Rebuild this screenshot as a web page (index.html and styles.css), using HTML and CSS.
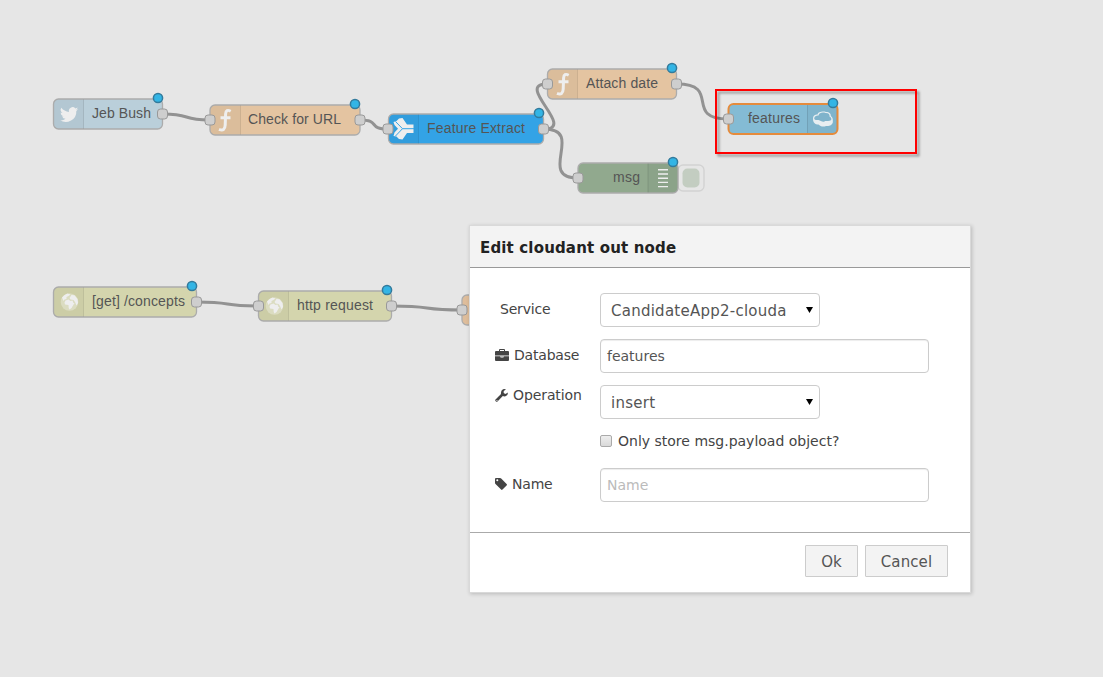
FILE: index.html
```html
<!DOCTYPE html>
<html lang="en">
<head>
<meta charset="utf-8">
<title>Flow editor</title>
<link rel="stylesheet" href="styles.css">
</head>
<body>
<svg class="canvas" width="1103" height="677" viewBox="0 0 1103 677">
  <defs>
    <rect id="port" x="-5" y="-5" width="10" height="10" rx="3"/>
    <circle id="dot" r="4.6"/>
    <g id="globe">
      <circle r="8.800" fill="#fff" opacity=".3"/>
      <path fill="#eee" d="M-7.500-4.500Q-5-7.500-2-8.500L1-7.500-1-6-3-5-3-3-5-2.500-6-1zM-4-1.500-1-2.500 1-1 3-1.500 4 1 5 1 3.500 3.500 2 6 0 7.500-.800 6-1 3-4.500 2.500-5 .5zM0-4 2-7 5-6.800 8-3 8.500 1 7 3.500 5.500 0 4-2 1-2.500z"/>
    </g>
    <path id="func" d="M5.200-8.800C2-10.500.3-9.500.1-6L-.3 5C-.5 9.500-2.500 11-6.500 9.300M-5-2.300H5"/>
    <filter id="soft" x="-10%" y="-20%" width="120%" height="150%"><feDropShadow dx="2.500" dy="2.500" stdDeviation="1.300" flood-color="#000" flood-opacity=".35"/></filter>
  </defs>

  <g class="wires">
    <path d="M163 114C192 114 181 120 209 120"/>
    <path d="M360 120C381 120 367 129 388 129"/>
    <path d="M544 129C577 129 514 84 547 84"/>
    <path d="M544 129C586 129 536 178 578 178"/>
    <path d="M677 84C722 84 683 119 728 119"/>
    <path d="M197 302C235 302 220 306 258 306"/>
    <path d="M392 306C436 306 418 310 462 310"/>
  </g>

  <g class="node">
    <rect class="body" x="53.500" y="99" width="109" height="30" rx="5" fill="#bacfda"/>
    <path class="shade" d="M58 99.500H83.500V128.500H58Q54 128.500 54 124V104Q54 99.500 58 99.500z"/>
    <path class="divider" d="M83.500 99.500V128.500"/>
    <path fill="#eee" transform="translate(60 105.500) scale(.76)" d="M24 4.600a10 10 0 0 1-2.800.8 5 5 0 0 0 2.100-2.700 10 10 0 0 1-3.100 1.200 4.900 4.900 0 0 0-8.400 4.500A14 14 0 0 1 1.700 3.100a4.900 4.900 0 0 0 1.500 6.600 5 5 0 0 1-2.200-.6 4.900 4.900 0 0 0 3.900 4.900 5 5 0 0 1-2.200.1 4.900 4.900 0 0 0 4.600 3.400A10 10 0 0 1 0 19.500a14 14 0 0 0 21.500-12.400A10 10 0 0 0 24 4.600z"/>
    <text x="92" y="118" textLength="59">Jeb Bush</text>
    <use href="#port" x="162.500" y="114"/><use href="#dot" x="158" y="98"/>
  </g>
  <g class="node">
    <rect class="body" x="210" y="105" width="150" height="30" rx="5" fill="#e4c4a1"/>
    <path class="shade" d="M215 105.500H240V134.500H215Q210.500 134.500 210.500 130V110Q210.500 105.500 215 105.500z"/>
    <path class="divider" d="M240.500 105.500V134.500"/>
    <use class="func" href="#func" x="225.500" y="120"/>
    <text x="248" y="124" textLength="93">Check for URL</text>
    <use href="#port" x="210" y="120"/><use href="#port" x="360" y="120"/><use href="#dot" x="355" y="104"/>
  </g>
  <g class="node">
    <rect class="body" x="388.500" y="114" width="155" height="30" rx="5" fill="#33a3e6"/>
    <path class="shade" d="M393 114.500H418V143.500H393Q389 143.500 389 139V119Q389 114.500 393 114.500z"/>
    <path class="divider" d="M418.500 114.500V143.500"/>
    <path fill="#eee" d="M399 118.500 402.500 118 407 124.500H413.500V133H407L402.500 139.500 399 139 396.500 136.500 393.500 136 394.500 132.500 398 128.700 394.500 125 393.500 122 396.500 121z"/>
    <path fill="none" stroke="#33a3e6" stroke-width="1" d="M395.500 121.500 402.500 128.700H414M402.500 128.700 395.500 136"/>
    <text x="427" y="133" textLength="98">Feature Extract</text>
    <use href="#port" x="388" y="129"/><use href="#port" x="543.500" y="129"/><use href="#dot" x="539" y="113"/>
  </g>
  <g class="node">
    <rect class="body" x="547.500" y="69" width="129" height="30" rx="5" fill="#e4c4a1"/>
    <path class="shade" d="M552 69.500H577V98.500H552Q548 98.500 548 94V74Q548 69.500 552 69.500z"/>
    <path class="divider" d="M577.500 69.500V98.500"/>
    <use class="func" href="#func" x="563.500" y="84"/>
    <text x="586" y="88" textLength="72">Attach date</text>
    <use href="#port" x="547.500" y="84"/><use href="#port" x="676.500" y="84"/><use href="#dot" x="672" y="68"/>
  </g>
  <g class="node">
    <rect x="678" y="165" width="26" height="26" rx="5" fill="#e6e6e6" stroke="#d2d2d2" stroke-width="1.300"/>
    <rect x="682.500" y="168.500" width="17" height="19" rx="5" fill="#c3cdc1"/>
    <rect class="body" x="578" y="163" width="100" height="30" rx="5" fill="#91a98e"/>
    <path class="shade" d="M648 163.500H673Q677.500 163.500 677.500 168V188Q677.500 192.500 673 192.500H648z"/>
    <path class="divider" d="M648 163.500V192.500"/>
    <path stroke="#eee" stroke-width="1.400" d="M658 169.700h10M658 174h10M658 178.200h10M658 182.400h10M658 186.600h10"/>
    <text x="613" y="182" textLength="27">msg</text>
    <use href="#port" x="578" y="178"/><use href="#dot" x="673" y="162"/>
  </g>
  <rect x="716" y="90" width="200" height="63" fill="none" stroke="#f00" stroke-width="2" filter="url(#soft)"/>
  <g class="node">
    <rect class="body selected" x="728.500" y="104" width="109" height="30" rx="5" fill="#84bbd4"/>
    <path class="shade" d="M807 105H833Q837 105 837 109V129Q837 133 833 133H807z"/>
    <path class="divider" d="M807.500 105V133"/>
    <path fill="#e8eef1" d="M813 119C813 115.500 815 114.500 817.500 114.500 818 111.500 823 111 826 112 829.500 112 831 114 830.800 116 833 117.500 833 119.500 832.800 122.500 832 125.500 829 126 826 126 823 127.500 820 126 818.500 124.500 815 124.500 813 122.500 813 119z"/>
    <path fill="#7fb3cb" d="M814.200 118.500C814.500 116 816.500 115.300 818.500 115.500 819 112.500 823 112 825.500 113 828.500 112.800 830 114.500 829.500 116.500 832 118 832 120.500 829.500 120.800 827.500 121.200 825.500 120.500 824 121.800 821.500 122 820.500 120.500 818.500 120 816 120.300 814.500 120 814.200 118.500z"/>
    <text x="748" y="123" textLength="52">features</text>
    <use href="#port" x="728.500" y="119"/><use href="#dot" x="833" y="103"/>
  </g>
  <g class="node">
    <rect class="body" x="53.500" y="287" width="143" height="30" rx="5" fill="#d4d5ad"/>
    <path class="shade" d="M58 287.500H83V316.500H58Q54 316.500 54 312V292Q54 287.500 58 287.500z"/>
    <path class="divider" d="M83.500 287.500V316.500"/>
    <use href="#globe" x="69.500" y="302"/>
    <text x="92" y="306" textLength="93">[get] /concepts</text>
    <use href="#port" x="196.500" y="302"/><use href="#dot" x="192" y="286"/>
  </g>
  <g class="node">
    <rect class="body" x="258.500" y="291" width="133" height="30" rx="5" fill="#d4d5ad"/>
    <path class="shade" d="M263 291.500H288V320.500H263Q259 320.500 259 316V296Q259 291.500 263 291.500z"/>
    <path class="divider" d="M288.500 291.500V320.500"/>
    <use href="#globe" x="274.500" y="306"/>
    <text x="297" y="310" textLength="76">http request</text>
    <use href="#port" x="258.500" y="306"/><use href="#port" x="391.500" y="306"/><use href="#dot" x="387" y="290"/>
  </g>
  <g class="node">
    <rect class="body" x="462" y="295" width="80" height="30" rx="5" fill="#debd9b"/>
    <use href="#port" x="462" y="310"/>
  </g>
</svg>

<section class="dialog">
  <header class="dialog-title"><span>Edit cloudant out node</span></header>
  <form class="dialog-form">
    <div class="row"><label class="label service">Service</label><div class="select"><span>CandidateApp2-clouda</span><i class="arrow"></i></div></div>
    <div class="row"><label class="label"><svg class="icon" width="14" height="12" viewBox="0 0 14 12"><path fill="#444" fill-rule="evenodd" d="M4 2V1q0-1 1-1h4q1 0 1 1v1h3q1 0 1 1v3.500H0V3q0-1 1-1zM5 1v1h4V1zM0 7.200h5.500V8.500h3V7.200H14V11q0 1-1 1H1q-1 0-1-1zM6.300 7.200h1.400v.6H6.300z"/></svg>Database</label><div class="input">features</div></div>
    <div class="row"><label class="label operation"><svg class="icon" width="13" height="13" viewBox="0 0 13 13"><path fill="#444" fill-rule="evenodd" d="M.5 10.500 6 5Q5.500 1.500 8 .3 9.500-.3 11 .4L8.700 2V4l1.600 1L13 3.500Q13 6.500 10.500 7.300 9 7.700 7.800 7L2.500 12.400Q1.700 13 1 12.400L.5 12Q0 11.200.5 10.500zM1.500 11v.9h.9V11z"/></svg>Operation</label><div class="select"><span>insert</span><i class="arrow"></i></div></div>
    <div class="check-row"><i class="checkbox"></i><span>Only store msg.payload object?</span></div>
    <div class="row"><label class="label"><svg class="icon" width="12" height="12" viewBox="0 0 12 12"><path fill="#444" fill-rule="evenodd" d="M0 1Q0 0 1 0H5q.7 0 1.200.5L11.600 6q.7.7 0 1.400L7.500 11.600q-.7.7-1.400 0L.5 6Q0 5.500 0 4.800zM1.300 2.300a1 1 0 1 0 2 0 1 1 0 1 0-2 0z"/></svg>Name</label><div class="input placeholder">Name</div></div>
  </form>
  <footer class="dialog-actions"><button class="button ok">Ok</button><button class="button cancel">Cancel</button></footer>
</section>
</body>
</html>
```
FILE: styles.css
```css
* { box-sizing: border-box; }
body { margin: 0; width: 1103px; height: 677px; overflow: hidden; background: #e6e6e6; position: relative; font-family: "DejaVu Sans", sans-serif; }
.canvas { display: block; }
.wires path { fill: none; stroke: #929292; stroke-width: 3; }
.body { stroke: #acacac; stroke-width: 1.3; }
.body.selected { stroke: #e58b3c; stroke-width: 2; }
.shade { fill: #000; opacity: .035; }
.divider { stroke: #000; stroke-opacity: .1; }
.func { fill: none; stroke: #eee; stroke-width: 3; }
.node text { font: 14px "Liberation Sans", Arial, sans-serif; fill: #555; }
#port { fill: #cecece; stroke: #999; stroke-width: 1; }
#dot { fill: #33b5e5; stroke: #337b9c; stroke-width: 1.5; }

.dialog { position: absolute; left: 470px; top: 226px; width: 500px; height: 366px; display: flex; flex-direction: column; background: #fff; box-shadow: 0 0 0 1px #d9d9d9, 1px 1px 4px 1px rgba(0,0,0,.2); color: #444; }
.dialog-title { height: 42px; padding: 2px 0 0 10px; display: flex; align-items: center; background: #f3f3f3; border-bottom: 1px solid #999; font-size: 15px; letter-spacing: .16px; font-weight: bold; color: #222; }
.dialog-form { height: 264px; padding: 25px 0 0 25px; display: flex; flex-direction: column; gap: 12px; font-size: 14px; }
.row { height: 34px; display: flex; }
.label { width: 105px; height: 32px; display: flex; align-items: center; letter-spacing: -.2px; }
.service { padding-left: 5px; }
.operation { height: 20px; letter-spacing: -.1px; }
.icon { margin-right: 5px; flex: none; }
.select { width: 220px; height: 34px; padding: 0 6px 0 10px; display: flex; align-items: center; justify-content: space-between; border: 1px solid #ccc; border-radius: 4px; font-size: 15px; letter-spacing: .25px; color: #555; }
.select span { padding-top: 2px; }
.arrow { width: 7px; height: 6px; background: #000; clip-path: polygon(0 0, 100% 0, 50% 100%); }
.input { width: 329px; height: 34px; padding: 0 6px; display: flex; align-items: center; border: 1px solid #ccc; border-radius: 4px; box-shadow: inset 0 1px 1px rgba(0,0,0,.075); color: #555; }
.placeholder { color: #bbb; }
.check-row { height: 20px; margin-bottom: 5px; padding-left: 105px; display: flex; align-items: center; gap: 6px; }
.checkbox { width: 12px; height: 12px; border: 1px solid #aaa; border-radius: 2px; background: linear-gradient(#eee, #d9d9d9); }
.dialog-actions { height: 60px; padding: 12px 22px 0 0; display: flex; justify-content: flex-end; gap: 7px; border-top: 1px solid #aaa; }
.button { height: 32px; padding: 2px 0 0; border: 1px solid #ccc; border-radius: 1px; background: #f3f3f3; font: 15px "DejaVu Sans", sans-serif; letter-spacing: .1px; color: #555; }
.ok { width: 53px; }
.cancel { width: 83px; }
```
